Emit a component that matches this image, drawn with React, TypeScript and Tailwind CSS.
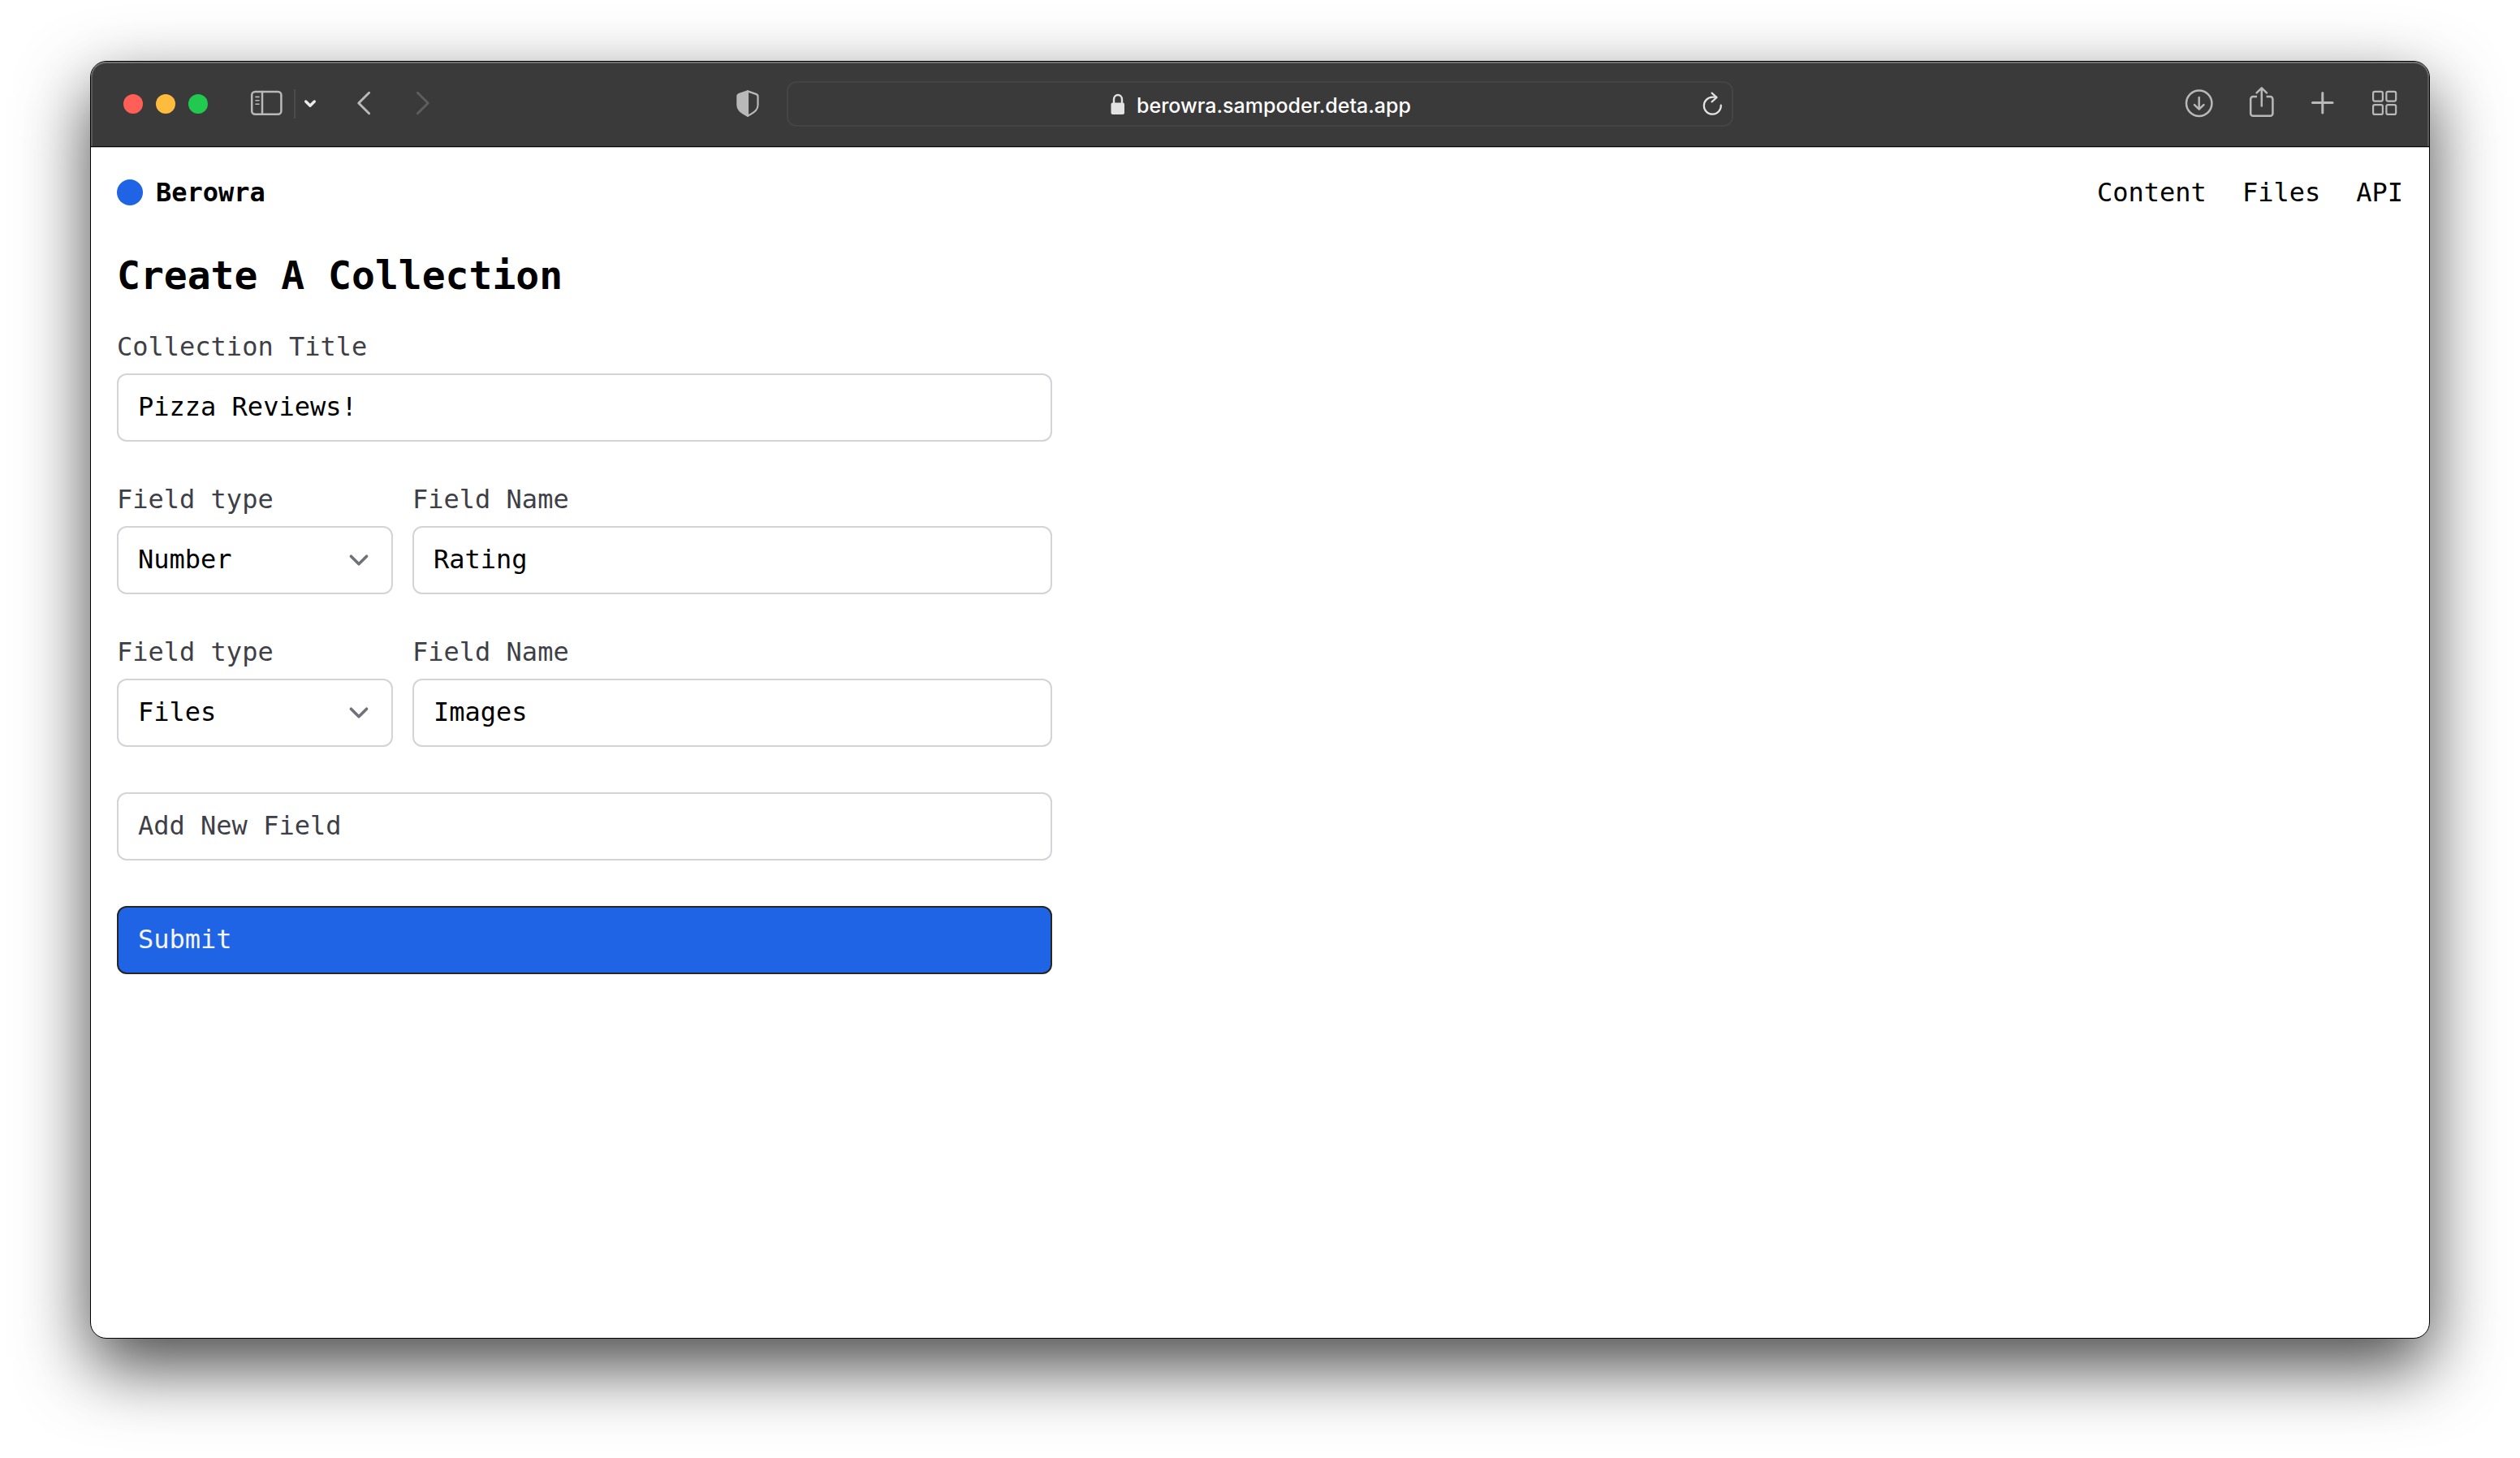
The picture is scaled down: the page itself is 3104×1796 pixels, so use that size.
import { useState } from "react";
import type { ReactNode } from "react";

const fieldTypes = ["Text", "Number", "Files", "Date"];

function Icon({ width = 40, sw = 2.5, children }: { width?: number; sw?: number; children: ReactNode }) {
  return (
    <svg
      width={width}
      height={40}
      viewBox={`0 0 ${width} 40`}
      fill="none"
      stroke="currentColor"
      strokeWidth={sw}
      strokeLinecap="round"
      strokeLinejoin="round"
      className="block overflow-visible"
      aria-hidden="true"
    >
      {children}
    </svg>
  );
}

function Toolbar() {
  return (
    <div className="grid h-[105px] shrink-0 grid-cols-[1fr_40.5%_1fr] items-center rounded-t-[19px] border-b border-black bg-[#3a3a3a] text-[#b9b9b9] shadow-[inset_0_2px_0_#6f6f6f,inset_2px_0_0_#5a5a5a,inset_-2px_0_0_#5a5a5a]">
      {/* Window controls and navigation */}
      <div className="flex items-center pl-10">
        <div className="flex gap-4">
          <button aria-label="Close" className="size-6 rounded-full bg-[#ff5f57]" />
          <button aria-label="Minimize" className="size-6 rounded-full bg-[#febc3e]" />
          <button aria-label="Zoom" className="size-6 rounded-full bg-[#21c94f]" />
        </div>
        <button aria-label="Sidebar" className="ml-[52px]">
          <Icon>
            <rect x="2.2" y="5" width="36.2" height="27.8" rx="4" />
            <path d="M15 5v27.6" />
            <path d="M7 11.4h4M7 15.8h4M7 20.3h4" strokeWidth="1.6" />
          </Icon>
        </button>
        <div className="ml-3.5 h-9 w-0.5 bg-[#4b4b4b]" />
        <button aria-label="Tab groups" className="ml-2 text-[#ececec]">
          <Icon width={20} sw={3.4}>
            <path d="M4.7 17l5.3 5.3 5.3-5.3" />
          </Icon>
        </button>
        <button aria-label="Back" className="ml-11">
          <Icon width={24} sw={3}>
            <path d="M18.6 6.3L5.8 19l12.8 12.7" />
          </Icon>
        </button>
        <button aria-label="Forward" className="ml-12 text-[#5e5e5e]">
          <Icon width={24} sw={3}>
            <path d="M6.4 6.3L19.2 19 6.4 31.7" />
          </Icon>
        </button>
        <button aria-label="Privacy report" className="mr-[30px] ml-auto">
          <Icon width={36} sw={2.2}>
            <path d="M18 4.4l10.2 3.5c1.6.6 2.3 1.2 2.3 2.8v10.8c0 5-2.5 7.8-12.5 13.3" />
            <path
              d="M18 4.4v30.4C8 29.3 5.4 26.5 5.4 21.5V10.7c0-1.6.7-2.2 2.3-2.8z"
              fill="currentColor"
            />
          </Icon>
        </button>
      </div>

      {/* Address bar */}
      <div className="flex h-14 items-center rounded-xl border-2 border-[#444444] text-[#e2e2e2]">
        <div className="flex-1" />
        <div className="flex items-center gap-3.5 pl-3">
          <Icon width={18} sw={2.4}>
            <path d="M4 19v-4.5a5 5.5 0 0 1 10 0V19" />
            <rect x="0.5" y="18.5" width="16.5" height="14.5" rx="2" fill="currentColor" stroke="none" />
          </Icon>
          <input
            aria-label="Address"
            defaultValue="berowra.sampoder.deta.app"
            className="field-sizing-content bg-transparent pt-1 font-['Inter','Liberation_Sans',sans-serif] text-[25px] leading-8 font-medium text-white outline-none"
          />
        </div>
        <div className="flex flex-1 justify-end pr-2.5">
          <button aria-label="Reload">
            <Icon width={28} sw={2.2}>
              <path d="M24.8 21.6A10.5 10.5 0 1 1 14.3 11.7H19" />
              <path d="M13.6 6.6l6 5.4-6 5.4" />
            </Icon>
          </button>
        </div>
      </div>

      <div className="flex items-center justify-end gap-9 pr-[34px]">
        <button aria-label="Downloads">
          <Icon>
            <circle cx="18.7" cy="19.2" r="15.7" />
            <path d="M18.7 12v14.5M13 21.2l5.7 5.5 5.7-5.5" />
          </Icon>
        </button>
        <button aria-label="Share">
          <Icon>
            <path
              d="M14 11H9.2a3 3 0 0 0-3 3v17.8a3 3 0 0 0 3 3h21.2a3 3 0 0 0 3-3V14a3 3 0 0 0-3-3h-4.8"
              strokeLinecap="butt"
            />
            <path d="M19.8 22.5V1M13.6 6.4l6.2-6 6.2 6" />
          </Icon>
        </button>
        <button aria-label="New tab">
          <Icon sw={3}>
            <path d="M18.8 6.4v24.6M6.5 18.6h24.6" />
          </Icon>
        </button>
        <button aria-label="Tab overview">
          <Icon sw={2.2}>
            <rect x="5.1" y="4.8" width="11.8" height="11.8" rx="2" />
            <rect x="21.4" y="4.8" width="11.8" height="11.8" rx="2" />
            <rect x="5.1" y="21.1" width="11.8" height="11.8" rx="2" />
            <rect x="21.4" y="21.1" width="11.8" height="11.8" rx="2" />
          </Icon>
        </button>
      </div>
    </div>
  );
}

function TextField({ id, label, value }: { id: string; label: string; value: string }) {
  return (
    <div className="flex min-w-0 flex-1 flex-col">
      <label htmlFor={id} className="mb-[18px] leading-[30px] text-zinc-700">
        {label}
      </label>
      <input
        id={id}
        type="text"
        defaultValue={value}
        className="h-21 w-full rounded-xl border-2 border-zinc-300 bg-white px-6 pb-0.5 text-black"
      />
    </div>
  );
}

function TypeSelect({ id, value }: { id: string; value: string }) {
  return (
    <div className="flex w-[340px] flex-col">
      <label htmlFor={id} className="mb-[18px] leading-[30px] text-zinc-700">
        Field type
      </label>
      <div className="grid items-center">
        <select
          id={id}
          defaultValue={value}
          className="col-start-1 row-start-1 h-21 w-full appearance-none rounded-xl border-2 border-zinc-300 bg-white px-6 pb-0.5 text-black"
        >
          {fieldTypes.map((type) => (
            <option key={type}>{type}</option>
          ))}
        </select>
        <svg
          viewBox="0 0 20 20"
          fill="none"
          stroke="currentColor"
          strokeWidth="1.5"
          strokeLinecap="round"
          strokeLinejoin="round"
          className="pointer-events-none col-start-1 row-start-1 mr-[18px] size-12 justify-self-end text-zinc-500"
        >
          <path d="M6 8l4 4 4-4" />
        </svg>
      </div>
    </div>
  );
}

export default function App() {
  const [fields, setFields] = useState([
    { type: "Number", name: "Rating" },
    { type: "Files", name: "Images" },
  ]);

  return (
    <div className="flex min-h-screen flex-col bg-white px-[111px] pt-[75px] pb-[147px]">
      <div className="flex flex-1 flex-col rounded-[20px] border border-black bg-white shadow-[0_34px_86px_rgba(0,0,0,0.72)]">
        <Toolbar />

        <div className="border-t border-[#b4b4b4] px-8 pt-[31px] pb-16 font-['DejaVu_Sans_Mono','Liberation_Mono',monospace] text-[32px] leading-[48px] text-black">
          <header className="mb-12 flex items-center justify-between">
            <a href="#" className="flex items-center gap-4 font-bold">
              <span className="size-8 rounded-full bg-[#2064e6]" />
              Berowra
            </a>
            <nav className="flex gap-11">
              <a href="#content">Content</a>
              <a href="#files">Files</a>
              <a href="#api">API</a>
            </nav>
          </header>

          <h1 className="mb-[43px] text-[48px] leading-[60px] font-bold">Create A Collection</h1>

          <form className="flex max-w-6xl flex-col gap-14" onSubmit={(e) => e.preventDefault()}>
            <TextField id="title" label="Collection Title" value="Pizza Reviews!" />
            {fields.map((field, i) => (
              <div key={i} className="flex gap-6">
                <TypeSelect id={`type-${i}`} value={field.type} />
                <TextField id={`name-${i}`} label="Field Name" value={field.name} />
              </div>
            ))}
            <button
              type="button"
              onClick={() => setFields([...fields, { type: "Text", name: "" }])}
              className="h-21 rounded-xl border-2 border-zinc-300 px-6 pb-0.5 text-left text-zinc-700"
            >
              Add New Field
            </button>
            <button
              type="submit"
              className="h-21 rounded-xl border-2 border-neutral-800 bg-[#2064e6] px-6 pb-0.5 text-left text-zinc-100"
            >
              Submit
            </button>
          </form>
        </div>
      </div>
    </div>
  );
}
